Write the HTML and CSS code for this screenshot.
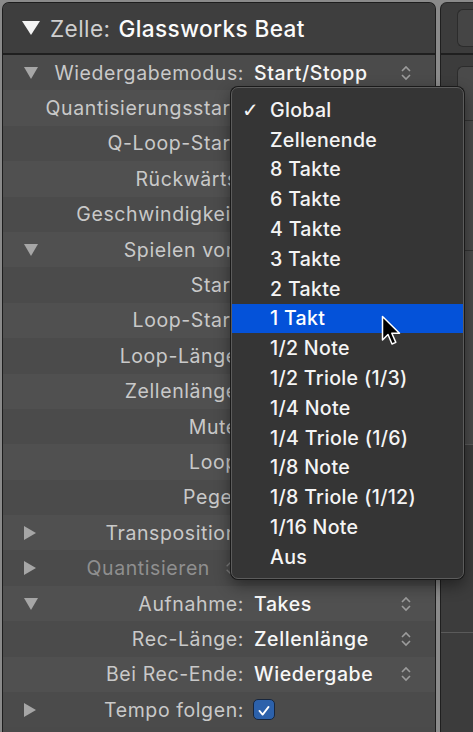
FILE: index.html
```html
<!DOCTYPE html>
<html lang="de">
<head>
<meta charset="utf-8">
<title>Zelle: Glassworks Beat</title>
<link rel="stylesheet" href="styles.css">
</head>
<body>
<div class="app">
  <section class="inspector">
    <header class="head">
      <svg class="tri-head" viewBox="0 0 18 14" width="18" height="14"><polygon points="0,0 18,0 9,14" fill="#f4f4f4"/></svg>
      <span class="head-key">Zelle:</span>
      <span class="head-val">Glassworks Beat</span>
    </header>
    <div class="rows">
      <div class="row odd">
        <span class="tri"><svg viewBox="0 0 14 12" width="14" height="12"><polygon points="0,0 14,0 7,12" fill="#a6a6a6"/></svg></span>
        <span class="label">Wiedergabemodus:</span>
        <span class="value">Start/Stopp</span>
        <span class="step"><svg viewBox="0 0 12 18" width="12" height="18"><path d="M2 7 L6 3 L10 7 M2 11 L6 15 L10 11" fill="none" stroke="#9c9c9c" stroke-width="1.6"/></svg></span>
      </div>
      <div class="row even"><span class="tri"></span><span class="label">Quantisierungsstart:</span></div>
      <div class="row odd"><span class="tri"></span><span class="label">Q-Loop-Start:</span></div>
      <div class="row even"><span class="tri"></span><span class="label">Rückwärts:</span></div>
      <div class="row odd"><span class="tri"></span><span class="label">Geschwindigkeit:</span></div>
      <div class="row even">
        <span class="tri"><svg viewBox="0 0 14 12" width="14" height="12"><polygon points="0,0 14,0 7,12" fill="#a6a6a6"/></svg></span>
        <span class="label">Spielen von:</span>
      </div>
      <div class="row odd"><span class="tri"></span><span class="label">Start:</span></div>
      <div class="row even"><span class="tri"></span><span class="label">Loop-Start:</span></div>
      <div class="row odd"><span class="tri"></span><span class="label">Loop-Länge:</span></div>
      <div class="row even"><span class="tri"></span><span class="label">Zellenlänge:</span></div>
      <div class="row odd"><span class="tri"></span><span class="label">Mute:</span></div>
      <div class="row even"><span class="tri"></span><span class="label">Loop:</span></div>
      <div class="row odd"><span class="tri"></span><span class="label">Pegel:</span></div>
      <div class="row even">
        <span class="tri"><svg viewBox="0 0 12 14" width="12" height="14"><polygon points="0,0 12,7 0,14" fill="#a6a6a6"/></svg></span>
        <span class="label">Transposition:</span>
      </div>
      <div class="row odd">
        <span class="tri"><svg viewBox="0 0 12 14" width="12" height="14"><polygon points="0,0 12,7 0,14" fill="#a6a6a6"/></svg></span>
        <span class="label dim">Quantisieren<svg class="dimstep" viewBox="0 0 12 18" width="10" height="16"><path d="M2 7 L6 3 L10 7 M2 11 L6 15 L10 11" fill="none" stroke="#7a7a7a" stroke-width="1.6"/></svg></span>
      </div>
      <div class="row even">
        <span class="tri"><svg viewBox="0 0 14 12" width="14" height="12"><polygon points="0,0 14,0 7,12" fill="#a6a6a6"/></svg></span>
        <span class="label">Aufnahme:</span>
        <span class="value">Takes</span>
        <span class="step"><svg viewBox="0 0 12 18" width="12" height="18"><path d="M2 7 L6 3 L10 7 M2 11 L6 15 L10 11" fill="none" stroke="#9c9c9c" stroke-width="1.6"/></svg></span>
      </div>
      <div class="row odd">
        <span class="tri"></span>
        <span class="label">Rec-Länge:</span>
        <span class="value">Zellenlänge</span>
        <span class="step"><svg viewBox="0 0 12 18" width="12" height="18"><path d="M2 7 L6 3 L10 7 M2 11 L6 15 L10 11" fill="none" stroke="#9c9c9c" stroke-width="1.6"/></svg></span>
      </div>
      <div class="row even">
        <span class="tri"></span>
        <span class="label">Bei Rec-Ende:</span>
        <span class="value">Wiedergabe</span>
        <span class="step"><svg viewBox="0 0 12 18" width="12" height="18"><path d="M2 7 L6 3 L10 7 M2 11 L6 15 L10 11" fill="none" stroke="#9c9c9c" stroke-width="1.6"/></svg></span>
      </div>
      <div class="row odd">
        <span class="tri"><svg viewBox="0 0 12 14" width="12" height="14"><polygon points="0,0 12,7 0,14" fill="#a6a6a6"/></svg></span>
        <span class="label">Tempo folgen:</span>
        <span class="value"><span class="check"><svg viewBox="0 0 22 21" width="22" height="21"><path d="M6 11 L9.5 15 L16 6.5" fill="none" stroke="#ffffff" stroke-width="2" stroke-linecap="round" stroke-linejoin="round"/></svg></span></span>
      </div>
    </div>
  </section>
  <section class="side">
    <div class="side-sec s1"><div class="sbox"></div></div>
    <div class="side-sec s2">
      <div class="inner">
        <div class="in-a"></div>
        <div class="in-b"></div>
        <div class="in-c"></div>
      </div>
    </div>
    <div class="side-sec s3"></div>
    <div class="side-sec s4"></div>
  </section>

  <ul class="menu">
    <li class="item"><span class="mark">✓</span>Global</li>
    <li class="item">Zellenende</li>
    <li class="item">8 Takte</li>
    <li class="item">6 Takte</li>
    <li class="item">4 Takte</li>
    <li class="item">3 Takte</li>
    <li class="item">2 Takte</li>
    <li class="item sel">1 Takt</li>
    <li class="item">1/2 Note</li>
    <li class="item">1/2 Triole (1/3)</li>
    <li class="item">1/4 Note</li>
    <li class="item">1/4 Triole (1/6)</li>
    <li class="item">1/8 Note</li>
    <li class="item">1/8 Triole (1/12)</li>
    <li class="item">1/16 Note</li>
    <li class="item">Aus</li>
  </ul>

  <svg class="cursor" viewBox="0 0 22 32" width="22" height="32"><path d="M1.5 1.5 L1.5 25 L7 19.5 L11 29 L14.8 27.4 L10.8 18.3 L18.5 18.3 Z" fill="#000" stroke="#fff" stroke-width="1.5" stroke-linejoin="round"/></svg>
</div>
</body>
</html>
```

FILE: styles.css
```css
* { box-sizing: border-box; }
html, body {
  margin: 0;
  padding: 0;
}
body {
  width: 473px;
  height: 732px;
  overflow: hidden;
  background: #8a8a8a;
  font-family: Inter, "Noto Sans", "Liberation Sans", sans-serif;
  -webkit-font-smoothing: antialiased;
}
.app {
  position: relative;
  display: flex;
  gap: 4px;
  padding: 2px 0 0 2px;
  height: 732px;
}
.inspector {
  width: 434px;
  flex: none;
  background: #4a4a4a;
  border: 1px solid #1d1d1d;
  border-bottom: none;
  border-radius: 7px 7px 0 0;
  overflow: hidden;
  display: flex;
  flex-direction: column;
}
.head {
  height: 52px;
  flex: none;
  background: #3e3e3e;
  border-bottom: 2px solid #1f1f1f;
  display: flex;
  align-items: center;
  padding-left: 19px;
  font-size: 22.6px;
  letter-spacing: 0.4px;
}
.tri-head { margin-right: 10px; }
.head-key { color: #cfcfcf; margin-right: 8px; }
.head-val { color: #fbfbfb; font-weight: 500; }
.rows { display: flex; flex-direction: column; }
.row {
  height: 35.4px;
  flex: none;
  display: flex;
  align-items: center;
  font-size: 19.5px;
  letter-spacing: 0.6px;
  white-space: nowrap;
}
.row.odd { background: #4b4b4b; }
.row.even { background: #505050; }
.tri {
  width: 46px;
  flex: none;
  padding-left: 21px;
  display: flex;
  align-items: center;
}
.label {
  width: 195px;
  flex: none;
  text-align: right;
  color: #c9c9c9;
  display: flex;
  justify-content: flex-end;
  align-items: center;
}
.label.dim { color: #8f8f8f; padding-right: 9px; }
.dimstep { margin-left: 15px; flex: none; }
.value {
  flex: 1;
  padding-left: 10px;
  color: #f7f7f7;
  font-weight: 500;
  display: flex;
  align-items: center;
}
.step {
  width: 22px;
  flex: none;
  margin-right: 13px;
  display: flex;
  align-items: center;
}
.check {
  width: 22px;
  height: 21px;
  border-radius: 5px;
  background: #2c61ab;
  border: 1px solid #17263d;
  display: flex;
  margin-left: -1px;
}
.side {
  flex: 1;
  background: #3c3c3c;
  border-left: 1px solid #1f1f1f;
  border-top: 1px solid #2a2a2a;
  border-radius: 7px 0 0 0;
  display: flex;
  flex-direction: column;
  overflow: hidden;
}
.side-sec { flex: none; }
.s1 {
  height: 52px;
  border-bottom: 2px solid #1f1f1f;
  padding: 6px 0 0 16px;
}
.sbox {
  height: 38px;
  background: #454545;
  border: 1px solid #2c2c2c;
  border-right: none;
  border-radius: 6px 0 0 6px;
}
.s2 {
  height: 390px;
  padding: 11px 0 0 16px;
  border-bottom: 1px solid #5a5a5a;
}
.inner {
  height: 100%;
  background: #4a4a4a;
  border: 1px solid #2c2c2c;
  border-right: none;
  border-bottom: none;
  border-radius: 6px 0 0 0;
  display: flex;
  flex-direction: column;
}
.in-a { height: 54px; border-bottom: 1px solid #333; }
.in-b { height: 130px; border-bottom: 1px solid #333; }
.in-c { flex: 1; }
.s3 { height: 188px; border-bottom: 1px solid #5a5a5a; }
.s4 { flex: 1; }

.menu {
  position: absolute;
  left: 231px;
  top: 87px;
  width: 233px;
  margin: 0;
  padding: 7px 0 6px;
  list-style: none;
  background: #353535;
  border: 1px solid #5c5c5c;
  border-radius: 7px;
  box-shadow: 0 0 0 1px #1a1a1a, 0 6px 16px rgba(0,0,0,0.45);
}
.item {
  position: relative;
  height: 29.8px;
  padding-left: 38px;
  display: flex;
  align-items: center;
  font-size: 19.6px;
  font-weight: 500;
  letter-spacing: 0.3px;
  color: #f4f4f4;
  white-space: nowrap;
}
.item.sel { background: #0452d9; color: #ffffff; }
.mark {
  position: absolute;
  left: 10px;
  font-weight: 400;
  font-family: "DejaVu Sans", sans-serif;
  font-size: 20px;
}
.cursor {
  position: absolute;
  left: 381px;
  top: 315px;
}
```
